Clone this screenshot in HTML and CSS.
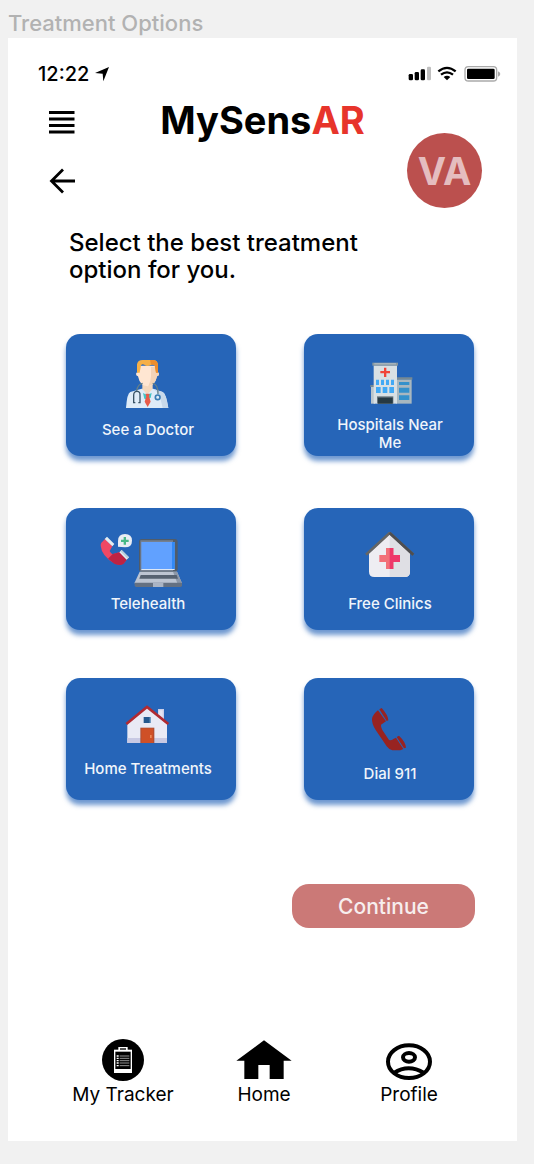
FILE: index.html
```html
<!DOCTYPE html>
<html lang="en">
<head>
<meta charset="utf-8">
<meta name="viewport" content="width=device-width, initial-scale=1">
<title>Treatment Options</title>
<link rel="stylesheet" href="styles.css">
</head>
<body>
<p class="frame-title">Treatment Options</p>
<div class="screen">
  <div class="status">
    <span class="status-time">12:22</span>
    <svg class="status-arrow" width="14" height="15" viewBox="0 0 42 45" aria-hidden="true"><path d="M42 0 25 43 23 20 0 18z"/></svg>
    <svg class="status-icons" width="93" height="16" viewBox="0 0 279 48" aria-hidden="true">
      <rect x="2" y="24" width="13" height="19" rx="4"/><rect x="20" y="18" width="13" height="25" rx="4"/><rect x="38" y="10" width="13" height="33" rx="4"/><rect x="57" y="2" width="12" height="41" rx="4" fill="#bfbfbf"/>
      <g fill="none" stroke="#000" stroke-width="7"><path d="M91 16q26-21 52 0M99 26q18-14 36 0"/></g><path d="M107 33q10-7 20 0l-10 10z"/>
      <rect x="171" y="2" width="95" height="43" rx="10" fill="none" stroke="#aaa" stroke-width="4"/><rect x="177" y="8" width="83" height="31" rx="4"/><path d="M270 16q7 3 7 8t-7 8z" fill="#aaa"/>
    </svg>
  </div>

  <header class="header">
    <div class="header-actions">
      <button class="icon-button" type="button" aria-label="Menu">
        <svg width="26" height="24" viewBox="0 0 26 24"><path d="M0 2.500h25.500M0 9h25.500M0 15.500h25.500M0 22h25.500" stroke="#000" stroke-width="3"/></svg>
      </button>
      <button class="icon-button" type="button" aria-label="Back">
        <svg width="26" height="26" viewBox="0 0 26 26"><path d="M26 13H3M14 1.500 2.500 13 14 24.500" fill="none" stroke="#000" stroke-width="2.800"/></svg>
      </button>
    </div>
    <h1 class="brand">MySens<span class="brand-accent">AR</span></h1>
    <button class="avatar" type="button" aria-label="Account VA">VA</button>
  </header>

  <main>
    <h2 class="prompt">Select the best treatment option for you.</h2>
    <div class="options">
      <button class="option" type="button">
        <svg class="option-icon" viewBox="24 39 300 186" aria-hidden="true">
          <path d="M108 189q3-44 13-48l34-10h34l29 10q10 4 17 48z" fill="#dfecf8"/><path d="m189 131 29 10q10 4 17 48h-17l-10-42z" fill="#c8d9ea"/>
          <path d="m159 144 12 6 14-6-3 14-10 6-9-3z" fill="#43c5c4"/><path d="M157 116h31v16l-16 16-15-15z" fill="#f5d8bd"/>
          <path d="M143 62h59v20q5 0 5 5t-6 7q-6 29-28 30-23-1-29-30-6-2-6-7t5-5z" fill="#ffe6d2"/><path d="M183 66h19v16q5 0 5 5t-6 7q-5 26-26 30 8-18 8-30z" fill="#f3d3b7"/>
          <path d="M141 83V58q2-13 17-13h32q14 0 14 18v20h-6l-4-22q-5-5-12-1-10 6-19-1-6-4-10 2l-4 22z" fill="#f6b047"/><path d="M180 45h10q14 0 14 18v20h-6l-4-22q-5-4-11-2z" fill="#ed8d2d"/>
          <path d="M166 146h13l-2 8 5 16-9 16-9-16 5-16z" fill="#e75b49"/>
          <g fill="none" stroke="#647f88" stroke-width="4"><path d="M158 115q-15 2-18 23M188 115q17 3 16 33"/></g>
          <path d="M136 173h-5v-22q0-12 10-12t9 12v22h-5" fill="none" stroke="#395366" stroke-width="4"/><circle cx="203" cy="157" r="7" fill="#dfecf8" stroke="#3c7eb5" stroke-width="5"/>
        </svg>
        <span class="option-label">See a Doctor</span>
      </button>
      <button class="option" type="button">
        <svg class="option-icon option-icon--short" viewBox="0 24 300 171" aria-hidden="true">
          <path d="M93 110h12v51H93z" fill="#bac5cc"/><path d="M91 105h14v6H91zM167 82h50v7h-50z" fill="#778993"/><path d="M169 89h46v72h-46z" fill="#a8b7bf"/>
          <path d="M101 46h70v115h-70z" fill="#d8e0e4"/><path d="M97 38h77v9H97z" fill="#8798a1"/><path d="M103 40h65v3h-65z" fill="#b6c2ca"/>
          <path d="M132 53h7v10h11v7h-11v11h-7V70h-11v-7h11z" fill="#f04439"/>
          <path d="M108 89h9v16h-9zM123 89h9v16h-9zM138 89h9v16h-9zM153 89h9v16h-9zM108 111h14v18h-14zM128 111h14v18h-14zM148 111h14v18h-14z" fill="#41a9f5"/>
          <path d="M177 96h31v9h-31zM177 113h31v15h-31zM177 136h31v14h-31z" fill="#3491cb"/><path d="M111 139h49v22h-49z" fill="#65747d"/><path d="M114 143h44v18h-44z" fill="#263943"/>
        </svg>
        <span class="option-label">Hospitals Near Me</span>
      </button>
      <button class="option" type="button">
        <svg class="option-icon" viewBox="24 36 300 186" aria-hidden="true">
          <path d="m34 68 11-11 22 22-8 14q3 7 9 10l20-6 22 22-9 11q-10 8-28 0Q35 108 32 77q0-6 2-9z" fill="#ef4864"/><path d="m68 102 20-5 22 22-9 12q-10 8-28 0L54 116z" fill="#be2343"/>
          <path d="m44 57 7-7 22 22-6 7zM88 97l7-7 22 22-7 7z" fill="#e4edf1"/><path d="m95 90 22 22-4 4-22-22z" fill="#b9d0da"/>
          <path d="M84 80V63q0-21 21-21t21 20-21 20z" fill="#e9edf4"/><path d="M101 51h7v8h8v7h-8v8h-7v-8h-8v-7h8z" fill="#48b987"/>
          <rect x="147" y="57" width="116" height="99" rx="9" fill="#515c69"/><path d="M151 61h98v93h-98z" fill="#758091"/><path d="M154 66h100v81H154z" fill="#61a1ff"/><path d="M246 66h8v81h-8z" fill="#3189f5"/><path d="M154 147h100v3H154z" fill="#dce7f6"/>
          <path d="M149 155h112l15 35H133z" fill="#bdc5d2"/><path d="m249 155 12 0 15 35h-14z" fill="#8d98a9"/><path d="M152 165h108l4 11H148z" fill="#566271"/><path d="M134 188h142v8q0 5-5 5H139q-5 0-5-5z" fill="#657182"/><path d="M189 188h31v13h-31z" fill="#aab4c4"/>
        </svg>
        <span class="option-label">Telehealth</span>
      </button>
      <button class="option" type="button">
        <svg class="option-icon" viewBox="0 36 300 186" aria-hidden="true">
          <path d="m149 42 61 58v55q0 16-16 16h-91q-16 0-16-16v-55z" fill="#eeedf2"/><path d="m149 42 61 58v55q0 16-16 16h-45z" fill="#dfdfe4"/>
          <path d="m78 104 71-65 71 65" fill="none" stroke="#656565" stroke-width="8"/><path d="m149 39 71 65" stroke="#4e4e50" stroke-width="8"/>
          <path d="M138 84h22v21h20v21h-20v21h-22v-21h-20v-21h20z" fill="#f27078"/><path d="M149 84h11v21h20v21h-20v21h-11z" fill="#ee3769"/>
        </svg>
        <span class="option-label">Free Clinics</span>
      </button>
      <button class="option" type="button">
        <svg class="option-icon option-icon--short" viewBox="-6 21 300 171" aria-hidden="true">
          <path d="M174 42h18v36l-18-16z" fill="#cacee8"/><path d="M176 46h12v22l-12-10z" fill="#e3e4f2"/>
          <path d="m141 37 60 50v57H82V87z" fill="#e9eaf5"/><path d="M82 129h119v15H82z" fill="#c8c9e3"/><path d="m79 87 62-51 64 51" fill="none" stroke="#b12a31" stroke-width="8"/>
          <path d="M131 66h21v18h-21z" fill="#25598f"/><path d="M149 66h3v18h-3z" fill="#77a5cc"/><path d="M121 98h42v46h-42z" fill="#a94d35"/><path d="M124 100h36v44h-36z" fill="#cf5027"/><path d="M150 120h5v9h-5z" fill="#eb8959"/>
        </svg>
        <span class="option-label">Home Treatments</span>
      </button>
      <button class="option" type="button">
        <svg class="option-icon" viewBox="-30 21 300 186" aria-hidden="true">
          <g fill="#982321"><path d="m84 46 24 33-15 10q-1 8 4 16l20 30q7 3 13-3l8-4 22 34-9 4h-24q-10-2-17-12L77 105Q65 86 66 72q2-14 18-26z"/><path d="m88 43 7-4q19 21 20 37l-5 2zM140 126l7-4q20 19 21 36l-6 2z"/></g>
        </svg>
        <span class="option-label">Dial 911</span>
      </button>
    </div>
    <div class="actions"><button class="continue" type="button">Continue</button></div>
  </main>

  <nav class="tabs" aria-label="Main">
    <a class="tab" href="#tracker">
      <svg width="42" height="42" viewBox="0 0 126 126" aria-hidden="true"><circle cx="63" cy="63" r="63"/><path d="M36 32h54v70H36z" fill="#fff"/><path d="M40 38h46v52H40z"/><path d="M49 24h28v10H49z" fill="#fff"/><path d="M54 28h18v4H54z"/><path d="M44 51h6M44 58h6M44 65h6M44 72h6M44 80h6" stroke="#fff" stroke-width="4"/><path d="M53 51h29M53 58h29M53 65h29M53 72h29M53 80h29" stroke="#ddd" stroke-width="2"/></svg>
      <span>My Tracker</span>
    </a>
    <a class="tab" href="#home">
      <svg width="56" height="42" viewBox="0 0 168 126" aria-hidden="true"><path d="m84 4 83 61h-24v55h-42V78H67v42H25V65H1z"/></svg>
      <span>Home</span>
    </a>
    <a class="tab" href="#profile">
      <svg width="46" height="42" viewBox="0 0 138 126" aria-hidden="true"><g fill="none" stroke="#000" stroke-width="12"><ellipse cx="69" cy="68" rx="63" ry="49"/><ellipse cx="69" cy="55" rx="18" ry="13"/><path d="M24 102q43-28 90 0"/></g></svg>
      <span>Profile</span>
    </a>
  </nav>
</div>
</body>
</html>
```

FILE: styles.css
```css
* { box-sizing: border-box; }
body { margin: 0; padding: 8px 17px 23px 8px; background: #f1f1f1; color: #000; font-family: Inter, "Liberation Sans", sans-serif; }
button { margin: 0; padding: 0; border: 0; background: none; color: inherit; font: inherit; cursor: pointer; }
svg { display: block; }
.frame-title { margin: 0; color: #b2b2b2; font-size: 22px; font-weight: 500; line-height: 30px; }
.screen { background: #fff; }
.status { display: flex; align-items: center; height: 56px; padding: 16px 16px 0 30px; }
.status-time { font-size: 20px; font-weight: 500; line-height: 24px; }
.status-arrow { margin-left: 6px; }
.status-icons { margin-left: auto; }

.header { display: grid; grid-template-columns: 1fr auto 1fr; padding: 0 35px 0 41px; }
.header-actions { display: flex; flex-direction: column; align-items: flex-start; gap: 34px; padding-top: 16px; }
.brand { margin: 0; padding-right: 6px; font-size: 38px; font-weight: 700; line-height: 52px; }
.brand-accent { color: #e7342b; }
.avatar { justify-self: end; width: 75px; height: 75px; margin-top: 39px; border-radius: 50%; background: #bb504e; color: #e5bdbf; font-size: 38px; font-weight: 700; }

.prompt { max-width: 380px; margin: 0; padding: 21px 0 0 61px; font-size: 24px; font-weight: 500; line-height: 27px; }
.options { display: grid; grid-template-columns: 1fr 1fr; grid-template-rows: 126px 122px 122px; gap: 48px 68px; padding: 51px 43px 0 58px; }
.option { display: flex; flex-direction: column; align-items: center; height: 122px; padding: 24px 6px 0 0; border-radius: 14px; background: #2665b8; box-shadow: 0 5px 5px #2665b8aa; color: #f0f5fb; }
.option:nth-child(even) { padding: 24px 0 0 2px; }
.option-icon { width: 100px; height: 62px; }
.option-icon--short { height: 57px; }
.option-label { max-width: 120px; padding-top: 1px; font-size: 15px; font-weight: 500; line-height: 18px; }
.option:nth-child(odd) .option-label { max-width: none; }

.actions { display: flex; justify-content: flex-end; padding: 84px 42px 0; }
.continue { width: 183px; height: 44px; border-radius: 17px; background: #cb7977; color: #f7eeee; font-size: 21px; font-weight: 500; }

.tabs { display: grid; grid-template-columns: 144fr 138fr 152fr; padding: 111px 32px 34px 43px; }
.tab { display: flex; flex-direction: column; align-items: center; gap: 2px; color: #000; font-size: 19px; line-height: 24px; text-decoration: none; }
```
